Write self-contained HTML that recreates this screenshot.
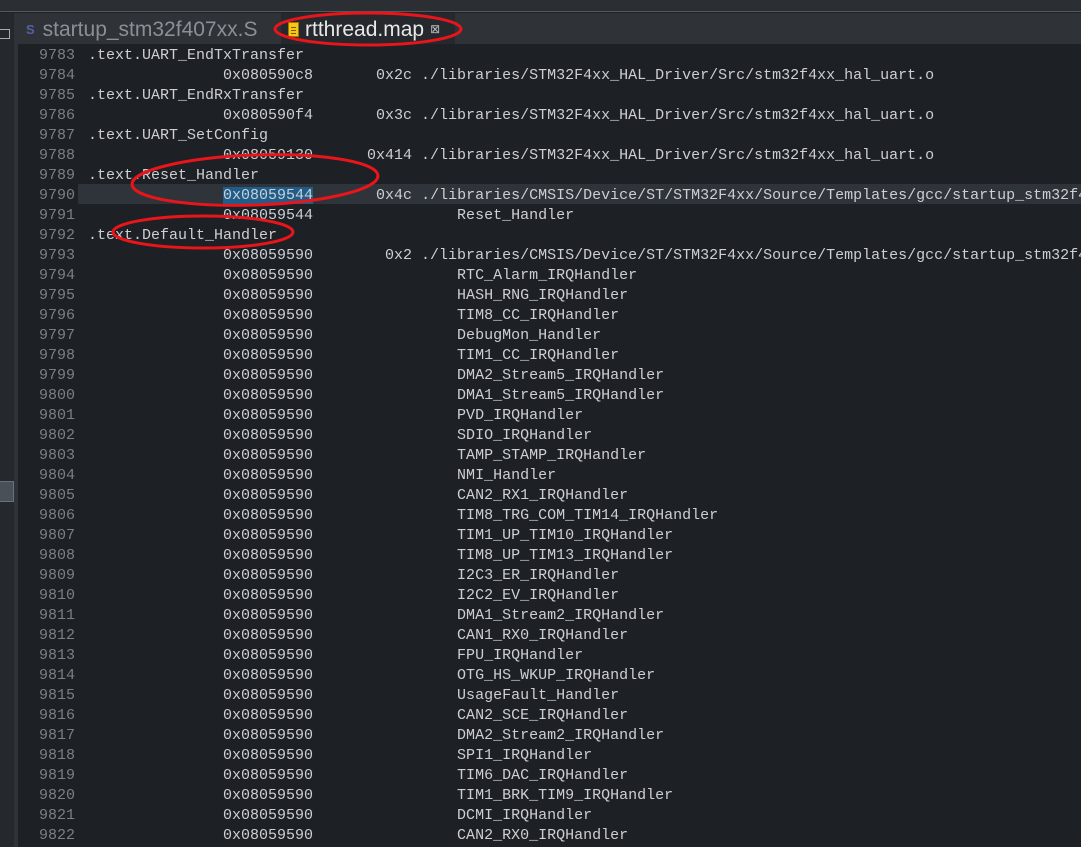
<!DOCTYPE html>
<html><head><meta charset="utf-8"><style>
*{margin:0;padding:0;box-sizing:border-box}
body{width:1081px;height:847px;overflow:hidden;background:#1e2125;position:relative;font-family:"Liberation Mono",monospace}
#top{position:absolute;left:0;top:0;width:1081px;height:12px;background:#2b2e33;border-bottom:1px solid #55585c}
#tabbar{position:absolute;left:0;top:13px;width:1081px;height:31px;background:#2f3237}
#left{position:absolute;left:0;top:13px;width:14px;height:834px;background:#25292e}
#lefticon{position:absolute;left:0;top:16px;width:10px;height:10px;border:1px solid #aaa;border-left:none}
#sep{position:absolute;left:14px;top:13px;width:4px;height:834px;background:#2e3338}
#leftsel{position:absolute;left:0;top:481px;width:14px;height:21px;background:#4a5058;border:1px solid #6a7078;border-left:none}
.tab{position:absolute;top:13px;height:31px;font-family:"Liberation Sans",sans-serif;font-size:21px;line-height:33px;overflow:hidden}
#t1{left:18px;width:262px;background:#2f3237;color:#8a9098;padding-left:8px}
#t1 .s{color:#5560a8;font-size:13px;font-weight:bold;margin-right:8px;vertical-align:2px}
#t2{left:281px;width:174px;background:#25292d;color:#e8e8e8;padding-left:24px}
#t2 .x{font-size:12px;color:#bbb;margin-left:6px;vertical-align:3px}
#ficon{position:absolute;left:288px;top:22px;width:11px;height:15px;background:#f5c518;border:1px solid #a07800}
#ficon i{position:absolute;left:2px;width:5px;height:1px;background:#7a5a00}
#ed{position:absolute;left:18px;top:44px;width:1063px;height:803px;background:#1d2024}
.row{position:absolute;left:18px;height:20px;width:1063px;font-size:15px;line-height:20px;white-space:pre;color:#cdcfd2;overflow:hidden;padding-top:2px}
.ln{display:inline-block;width:57px;text-align:right;color:#7b8087;margin-right:13px}
.curbg{position:absolute;left:78px;top:184px;width:1003px;height:20px;background:#2f343a}
.sel{background:#1f5d8a}
</style></head><body>
<div id="top"></div><div id="tabbar"></div>
<div id="left"><div id="lefticon"></div></div><div id="sep"></div><div id="leftsel"></div>
<div class="tab" id="t1"><span class="s">S</span>startup_stm32f407xx.S</div>
<div class="tab" id="t2">rtthread.map<span class="x">⊠</span></div>
<div id="ficon"><i style="top:4px"></i><i style="top:7px"></i><i style="top:10px"></i></div>
<div id="ed"></div>
<div class="curbg"></div>
<div class="row" style="top:44px"><span class="ln">9783</span>.text.UART_EndTxTransfer</div>
<div class="row" style="top:64px"><span class="ln">9784</span>               0x080590c8       0x2c ./libraries/STM32F4xx_HAL_Driver/Src/stm32f4xx_hal_uart.o</div>
<div class="row" style="top:84px"><span class="ln">9785</span>.text.UART_EndRxTransfer</div>
<div class="row" style="top:104px"><span class="ln">9786</span>               0x080590f4       0x3c ./libraries/STM32F4xx_HAL_Driver/Src/stm32f4xx_hal_uart.o</div>
<div class="row" style="top:124px"><span class="ln">9787</span>.text.UART_SetConfig</div>
<div class="row" style="top:144px"><span class="ln">9788</span>               0x08059130      0x414 ./libraries/STM32F4xx_HAL_Driver/Src/stm32f4xx_hal_uart.o</div>
<div class="row" style="top:164px"><span class="ln">9789</span>.text.Reset_Handler</div>
<div class="row" style="top:184px"><span class="ln">9790</span>               <span class="sel">0x08059544</span>       0x4c ./libraries/CMSIS/Device/ST/STM32F4xx/Source/Templates/gcc/startup_stm32f407xx.o</div>
<div class="row" style="top:204px"><span class="ln">9791</span>               0x08059544                Reset_Handler</div>
<div class="row" style="top:224px"><span class="ln">9792</span>.text.Default_Handler</div>
<div class="row" style="top:244px"><span class="ln">9793</span>               0x08059590        0x2 ./libraries/CMSIS/Device/ST/STM32F4xx/Source/Templates/gcc/startup_stm32f407xx.o</div>
<div id="syms"></div>
<script>
var n=["RTC_Alarm_IRQHandler","HASH_RNG_IRQHandler","TIM8_CC_IRQHandler","DebugMon_Handler","TIM1_CC_IRQHandler","DMA2_Stream5_IRQHandler","DMA1_Stream5_IRQHandler","PVD_IRQHandler","SDIO_IRQHandler","TAMP_STAMP_IRQHandler","NMI_Handler","CAN2_RX1_IRQHandler","TIM8_TRG_COM_TIM14_IRQHandler","TIM1_UP_TIM10_IRQHandler","TIM8_UP_TIM13_IRQHandler","I2C3_ER_IRQHandler","I2C2_EV_IRQHandler","DMA1_Stream2_IRQHandler","CAN1_RX0_IRQHandler","FPU_IRQHandler","OTG_HS_WKUP_IRQHandler","UsageFault_Handler","CAN2_SCE_IRQHandler","DMA2_Stream2_IRQHandler","SPI1_IRQHandler","TIM6_DAC_IRQHandler","TIM1_BRK_TIM9_IRQHandler","DCMI_IRQHandler","CAN2_RX0_IRQHandler"];
var h="";for(var i=0;i<n.length;i++){h+='<div class="row" style="top:'+(264+i*20)+'px"><span class="ln">'+(9794+i)+'</span>               0x08059590                '+n[i]+'</div>';}
document.getElementById("syms").innerHTML=h;
</script>
<svg width="1081" height="847" style="position:absolute;left:0;top:0" fill="none" stroke="#e8151b" stroke-width="3">
<ellipse cx="368" cy="29" rx="93" ry="16"/>
<ellipse cx="255" cy="180" rx="123" ry="25" transform="rotate(-2 255 180)"/>
<ellipse cx="203" cy="232" rx="90" ry="16"/>
</svg>
</body></html>
